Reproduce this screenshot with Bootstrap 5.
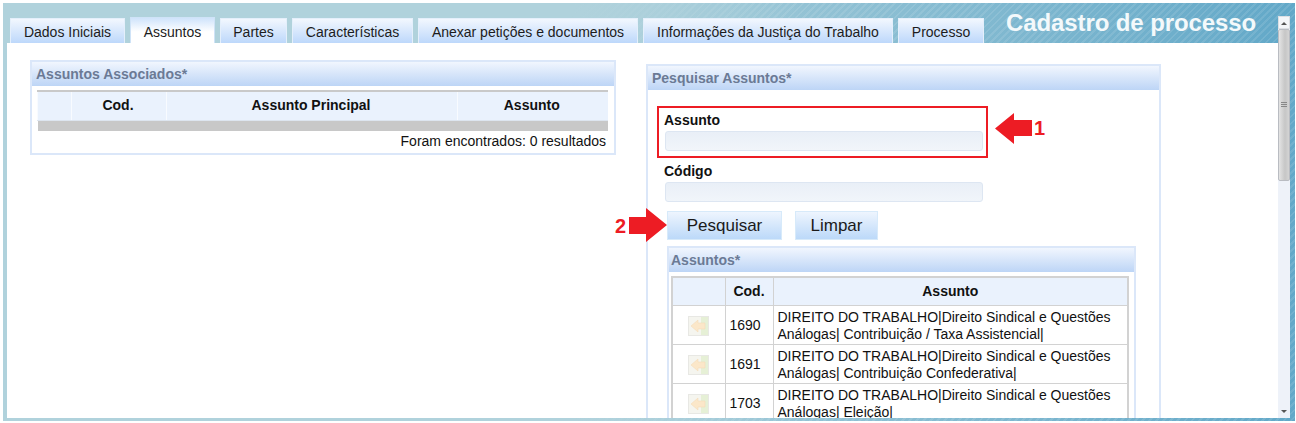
<!DOCTYPE html>
<html lang="pt-BR">
<head>
<meta charset="utf-8">
<title>Cadastro de processo</title>
<link href="https://cdn.jsdelivr.net/npm/bootstrap@5.3.0/dist/css/bootstrap.min.css" rel="stylesheet">
<style>
html,body{height:100%;overflow:hidden;background:#fff}
body{font-family:"Liberation Sans",Arial,sans-serif;font-size:14px;color:#111;line-height:18px}
.frame{margin:3px 1px 2px 3px;height:418px;padding:0 5px 3px 4px;background:linear-gradient(90deg,#b0d2dc 0,#b0d2dc 44%,rgba(176,210,220,0) 62%),repeating-linear-gradient(135deg,rgba(255,255,255,.1) 0 2px,rgba(255,255,255,0) 2px 5px),linear-gradient(90deg,#b0d2dc 0,#b0d2dc 40%,#62a8c8 100%)}
.mainc{width:1271px;height:415px}
.head{height:40px;padding-left:3px}
.tabx{gap:5px}
.tabi{height:25px;background:linear-gradient(#f2f7fe,#bdd8fb);padding-top:4px;text-align:center;color:#1c1c1c;border:solid #e4effb;border-width:1px 1px 0;white-space:nowrap}
.tabi.on{height:26px;background:linear-gradient(#cfe3fb 0,#fff 55%);padding-top:5px;border-color:#cfe3f7}
.tw1{width:115px}.tw2{width:85px}.tw3{width:67px}.tw4{width:121px}.tw5{width:220px}.tw6{width:250px}.tw7{width:86px}
.ttl{font-size:24px;font-weight:700;color:#f4f9fb;line-height:28px;margin-left:22px;margin-bottom:6px;white-space:nowrap;letter-spacing:-.1px}
.sheet{background:#fff;height:375px;overflow:hidden}
.pan{border:2px solid #dbe7f9}
.panl{width:586px;margin:17px 0 0 23px;height:95px}
.panr{width:515px;margin:21px 0 0 30px;height:400px}
.panh{height:24px;background:linear-gradient(#f1f6fe,#bdd5f6);font-weight:700;color:#6b7a95;padding:3px 0 0 4px}
.inn .panh{padding-left:2px}
.tb1{width:570px;margin:4px 0 0 5px;table-layout:fixed;border-top:2px solid #c9c9c9}
.tb1 th{background:#eaf2fd;height:29px;text-align:center;padding:0 2px 2px 0;border-bottom:1px solid #dde5ef;border-left:1px solid #f8fbff}
.tb1 td{background:#c8c8c8;height:11px;padding:0;border:0}
.cnt{width:574px;text-align:right;padding-top:1px}
.flagbox{width:331px;height:52px;margin:16px 0 0 9px;border:2px solid #ed1c24;padding:3px 0 0 5px}
.lab{font-weight:700;height:18px;display:block;color:#111}
.fake{display:block;width:318px;height:20px;margin:2px 0 0 1px;background:linear-gradient(#e9eff7,#f1f5fa);border:1px solid #dde6f2;border-radius:3px;padding:0}
.codw{margin:4px 0 0 16px}
.acts{margin:9px 0 0 19px;gap:13px;height:29px}
.bt{height:29px;border:1px solid #d7eafa;border-radius:0;background:linear-gradient(#eef5fe,#bcd9f9);font-size:17px;line-height:27px;padding:0;color:#1a1a1a}
.bta{width:115px}
.btb{width:83px}
.inn{width:469px;height:200px;margin:6px 0 0 19px}
.tb2{width:456px;margin:4px 0 0 2px;table-layout:fixed;border-collapse:collapse;border:2px solid #d2d2d2}
.tb2 th,.tb2 td{border:1px solid #d2d2d2;padding:0;vertical-align:middle;background:#fff;color:#111}
.tb2 th{height:28px;background:#eaf2fd;text-align:center}
.tb2 td{height:39px;line-height:17.5px;padding-top:3px}
.tb2 td.tx{padding-left:4px}
.tb2 td.cd{padding-left:4px}
.ic{display:block;margin:0 auto}
.mk{position:absolute;display:block}
.num{position:absolute;color:#ed1c24;font-weight:700;font-size:20px;line-height:20px}
.sbar{width:12px;margin-top:13px;height:402px;background:#eef2f9}
.sbt{height:13px;background:#f4f6f9;border:1px solid #dcdfe4}
.sth{height:152px;background:linear-gradient(90deg,#e4e4e4,#c6c6c6 60%,#d4d4d4);border:1px solid #b9bcc2;border-radius:2px}
.grp{width:6px;height:6px;background:repeating-linear-gradient(#888 0 1px,transparent 1px 2px)}
.tri{width:0;height:0;border:3px solid transparent}
.tri.up{border-bottom:3px solid #555;margin-top:-2px}
.tri.dn{border-top:3px solid #555;margin-top:3px}
</style>
</head>
<body>
<div class="frame d-flex">
  <div class="mainc d-flex flex-column">
    <div class="head d-flex align-items-end">
      <div class="tabx d-flex align-items-end">
        <div class="tabi tw1">Dados Iniciais</div>
        <div class="tabi tw2 on">Assuntos</div>
        <div class="tabi tw3">Partes</div>
        <div class="tabi tw4">Características</div>
        <div class="tabi tw5">Anexar petições e documentos</div>
        <div class="tabi tw6">Informações da Justiça do Trabalho</div>
        <div class="tabi tw7">Processo</div>
      </div>
      <div class="ttl">Cadastro de processo</div>
    </div>
    <div class="sheet d-flex align-items-start">
      <div class="pan panl">
        <div class="panh">Assuntos Associados*</div>
        <table class="tb1">
          <colgroup><col style="width:34px"><col style="width:95px"><col style="width:291px"><col style="width:150px"></colgroup>
          <thead><tr><th></th><th>Cod.</th><th>Assunto Principal</th><th>Assunto</th></tr></thead>
          <tbody><tr><td colspan="4"></td></tr></tbody>
        </table>
        <div class="cnt">Foram encontrados: 0 resultados</div>
      </div>
      <div class="pan panr">
        <div class="panh">Pesquisar Assuntos*</div>
        <div class="flagbox position-relative">
          <label class="lab">Assunto</label>
          <span class="fake"></span>
          <svg class="mk" style="left:336px;top:5px" width="38" height="33" viewBox="0 0 38 33"><path d="M0 15.5 19 0V7H37V23H19V31Z" fill="#ed1c24"/></svg>
          <span class="num" style="left:375px;top:10px">1</span>
        </div>
        <div class="codw">
          <label class="lab">Código</label>
          <span class="fake"></span>
        </div>
        <div class="acts d-flex position-relative">
          <button type="button" class="bt bta">Pesquisar</button>
          <button type="button" class="bt btb">Limpar</button>
          <svg class="mk" style="left:-38px;top:-3px" width="38" height="35" viewBox="0 0 38 35"><path d="M0 9H17V0L38 17 17 34V26H0Z" fill="#ed1c24"/></svg>
          <span class="num" style="left:-52px;top:5px">2</span>
        </div>
        <div class="pan inn">
          <div class="panh">Assuntos*</div>
          <table class="tb2">
            <colgroup><col style="width:53px"><col style="width:48px"><col style="width:355px"></colgroup>
            <thead><tr><th></th><th>Cod.</th><th>Assunto</th></tr></thead>
            <tbody>
              <tr>
                <td><svg class="ic" width="21" height="20" viewBox="0 0 21 20"><rect x=".5" y=".5" width="20" height="19" fill="#f5f5ef" stroke="#e8e8e4"/><rect x="13" y="1" width="7" height="18" fill="#e6f0d6"/><path d="M3 10 10 4V7H17V13H10V16Z" fill="#fbe7c9" stroke="#f5dcb8" stroke-width=".6"/></svg></td>
                <td class="cd">1690</td>
                <td class="tx">DIREITO DO TRABALHO|Direito Sindical e Questões Análogas| Contribuição / Taxa Assistencial|</td>
              </tr>
              <tr>
                <td><svg class="ic" width="21" height="20" viewBox="0 0 21 20"><rect x=".5" y=".5" width="20" height="19" fill="#f5f5ef" stroke="#e8e8e4"/><rect x="13" y="1" width="7" height="18" fill="#e6f0d6"/><path d="M3 10 10 4V7H17V13H10V16Z" fill="#fbe7c9" stroke="#f5dcb8" stroke-width=".6"/></svg></td>
                <td class="cd">1691</td>
                <td class="tx">DIREITO DO TRABALHO|Direito Sindical e Questões Análogas| Contribuição Confederativa|</td>
              </tr>
              <tr>
                <td><svg class="ic" width="21" height="20" viewBox="0 0 21 20"><rect x=".5" y=".5" width="20" height="19" fill="#f5f5ef" stroke="#e8e8e4"/><rect x="13" y="1" width="7" height="18" fill="#e6f0d6"/><path d="M3 10 10 4V7H17V13H10V16Z" fill="#fbe7c9" stroke="#f5dcb8" stroke-width=".6"/></svg></td>
                <td class="cd">1703</td>
                <td class="tx">DIREITO DO TRABALHO|Direito Sindical e Questões Análogas| Eleição|</td>
              </tr>
            </tbody>
          </table>
        </div>
      </div>
    </div>
  </div>
  <div class="sbar d-flex flex-column">
    <div class="sbt d-flex justify-content-center align-items-center"><span class="tri up"></span></div>
    <div class="sth d-flex justify-content-center align-items-center"><span class="grp"></span></div>
    <div class="flex-grow-1"></div>
    <div class="d-flex justify-content-center" style="height:11px"><span class="tri dn"></span></div>
  </div>
</div>
<script src="https://cdn.jsdelivr.net/npm/bootstrap@5.3.0/dist/js/bootstrap.bundle.min.js"></script>
</body>
</html>
